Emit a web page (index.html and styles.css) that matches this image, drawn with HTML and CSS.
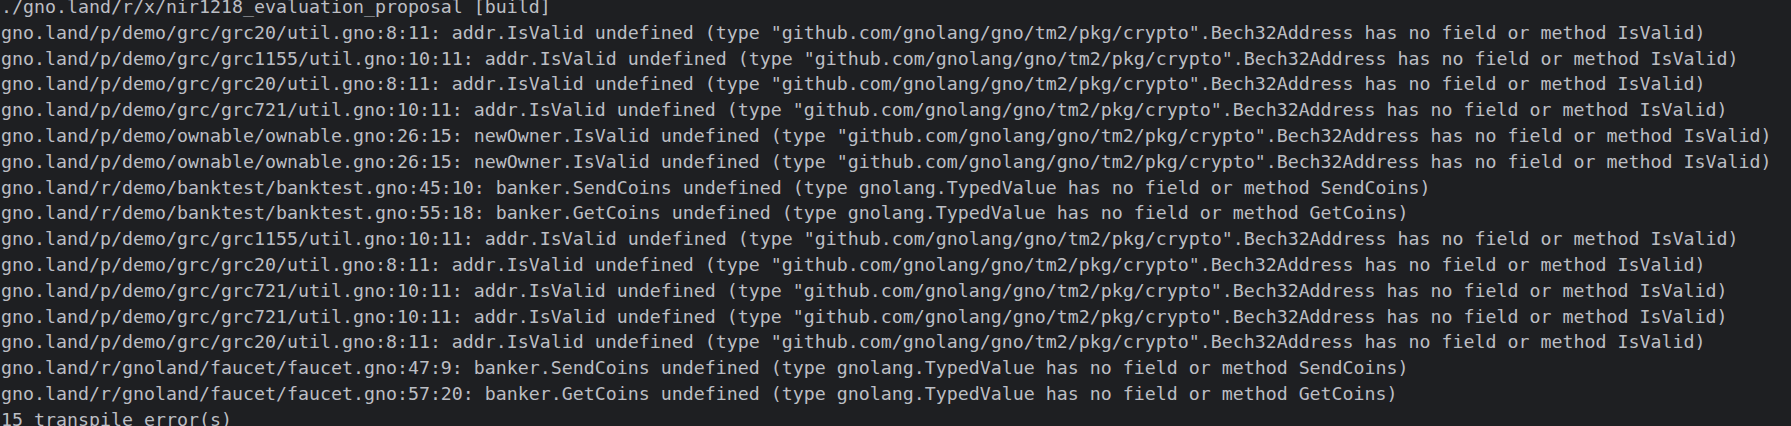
FILE: index.html
```html
<!DOCTYPE html>
<html>
<head>
<meta charset="utf-8">
<link rel="stylesheet" href="styles.css">
</head>
<body>
<pre class="console">./gno.land/r/x/nir1218_evaluation_proposal [build]
gno.land/p/demo/grc/grc20/util.gno:8:11: addr.IsValid undefined (type "github.com/gnolang/gno/tm2/pkg/crypto".Bech32Address has no field or method IsValid)
gno.land/p/demo/grc/grc1155/util.gno:10:11: addr.IsValid undefined (type "github.com/gnolang/gno/tm2/pkg/crypto".Bech32Address has no field or method IsValid)
gno.land/p/demo/grc/grc20/util.gno:8:11: addr.IsValid undefined (type "github.com/gnolang/gno/tm2/pkg/crypto".Bech32Address has no field or method IsValid)
gno.land/p/demo/grc/grc721/util.gno:10:11: addr.IsValid undefined (type "github.com/gnolang/gno/tm2/pkg/crypto".Bech32Address has no field or method IsValid)
gno.land/p/demo/ownable/ownable.gno:26:15: newOwner.IsValid undefined (type "github.com/gnolang/gno/tm2/pkg/crypto".Bech32Address has no field or method IsValid)
gno.land/p/demo/ownable/ownable.gno:26:15: newOwner.IsValid undefined (type "github.com/gnolang/gno/tm2/pkg/crypto".Bech32Address has no field or method IsValid)
gno.land/r/demo/banktest/banktest.gno:45:10: banker.SendCoins undefined (type gnolang.TypedValue has no field or method SendCoins)
gno.land/r/demo/banktest/banktest.gno:55:18: banker.GetCoins undefined (type gnolang.TypedValue has no field or method GetCoins)
gno.land/p/demo/grc/grc1155/util.gno:10:11: addr.IsValid undefined (type "github.com/gnolang/gno/tm2/pkg/crypto".Bech32Address has no field or method IsValid)
gno.land/p/demo/grc/grc20/util.gno:8:11: addr.IsValid undefined (type "github.com/gnolang/gno/tm2/pkg/crypto".Bech32Address has no field or method IsValid)
gno.land/p/demo/grc/grc721/util.gno:10:11: addr.IsValid undefined (type "github.com/gnolang/gno/tm2/pkg/crypto".Bech32Address has no field or method IsValid)
gno.land/p/demo/grc/grc721/util.gno:10:11: addr.IsValid undefined (type "github.com/gnolang/gno/tm2/pkg/crypto".Bech32Address has no field or method IsValid)
gno.land/p/demo/grc/grc20/util.gno:8:11: addr.IsValid undefined (type "github.com/gnolang/gno/tm2/pkg/crypto".Bech32Address has no field or method IsValid)
gno.land/r/gnoland/faucet/faucet.gno:47:9: banker.SendCoins undefined (type gnolang.TypedValue has no field or method SendCoins)
gno.land/r/gnoland/faucet/faucet.gno:57:20: banker.GetCoins undefined (type gnolang.TypedValue has no field or method GetCoins)
15 transpile error(s)</pre>
</body>
</html>
```
FILE: styles.css
```css
html, body {
  margin: 0;
  padding: 0;
  background: #1e1f22;
  overflow: hidden;
  height: 100%;
}
.console {
  margin: -6px 0 0 0;
  padding: 0 0 0 1px;
  font-family: "DejaVu Sans Mono", "Liberation Mono", monospace;
  font-size: 18.27px;
  line-height: 25.8px;
  color: #bcbec4;
  white-space: pre;
}
```
